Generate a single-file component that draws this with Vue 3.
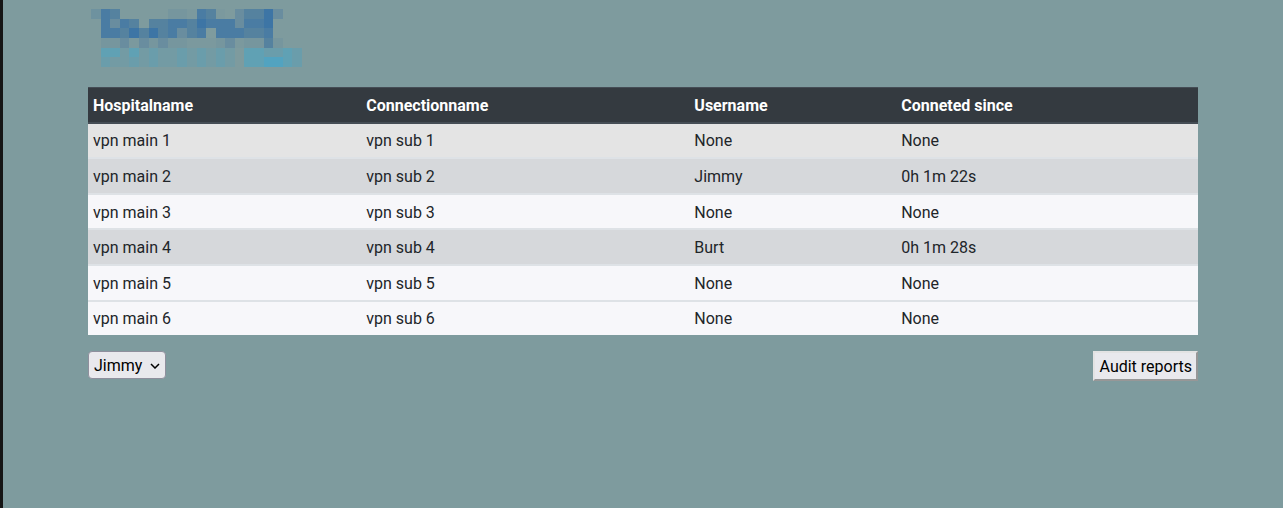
<script setup>
import { ref } from 'vue'

const rows = ref([
  { main: 'vpn main 1', sub: 'vpn sub 1', user: 'None', since: 'None', state: 'hovered' },
  { main: 'vpn main 2', sub: 'vpn sub 2', user: 'Jimmy', since: '0h 1m 22s', state: 'active tall' },
  { main: 'vpn main 3', sub: 'vpn sub 3', user: 'None', since: 'None', state: 'lowered' },
  { main: 'vpn main 4', sub: 'vpn sub 4', user: 'Burt', since: '0h 1m 28s', state: 'active tall' },
  { main: 'vpn main 5', sub: 'vpn sub 5', user: 'None', since: 'None', state: 'tall' },
  { main: 'vpn main 6', sub: 'vpn sub 6', user: 'None', since: 'None', state: '' },
])
const user = ref('Jimmy')

// Logo mosaic: one letter per tile
const palette = {
  a: '#6e929f', b: '#55829f', c: '#4a7ca3', d: '#3d75a5', e: '#76969e',
  f: '#698d9f', g: '#6a9dab', h: '#60a1b4', i: '#52a3c0', k: '#739ba4', m: '#7b999e',
}
const mosaic = [
  'acb.....eemcbm.fbbdf..',
  '.cfcb.bbccbdcccfccd...',
  '.ccbdbdbcfbc.cccbbc...',
  '.eefmfefeemmmefmeebe..',
  '.hhkhkgkkgkgkgk.hhgghg',
  '.gkkgkgkkgkgkgk.hhiihg',
]
const tiles = mosaic.flatMap((line, y) =>
  [...line].map((c, x) => ({ x, y, fill: palette[c] })).filter((t) => t.fill)
)
</script>

<template>
  <div class="page">
    <main class="container">
      <svg class="logo" viewBox="0 0 22 6" preserveAspectRatio="none" shape-rendering="crispEdges" role="img" aria-label="Logo">
        <rect v-for="t in tiles" :key="`${t.x}-${t.y}`" :x="t.x" :y="t.y" width="1" height="1" :fill="t.fill" />
      </svg>
      <table>
        <thead>
          <tr>
            <th scope="col">Hospitalname</th>
            <th scope="col">Connectionname</th>
            <th scope="col">Username</th>
            <th scope="col">Conneted since</th>
          </tr>
        </thead>
        <tbody>
          <tr v-for="r in rows" :key="r.main" :class="r.state">
            <td>{{ r.main }}</td>
            <td>{{ r.sub }}</td>
            <td>{{ r.user }}</td>
            <td>{{ r.since }}</td>
          </tr>
        </tbody>
      </table>
      <div class="actions">
        <div class="picker">
          <select v-model="user" aria-label="User">
            <option>Jimmy</option>
            <option>Burt</option>
          </select>
          <svg class="chevron" viewBox="0 0 10 6" aria-hidden="true"><path d="M1 1l4 4 4-4" /></svg>
        </div>
        <button type="button">Audit reports</button>
      </div>
    </main>
  </div>
</template>

<style>
body {
  background: #7e9b9e;
}
</style>

<style scoped>
.page {
  box-sizing: border-box;
  min-height: 100vh;
  border-left: 3px solid #151515;
  background: #7e9b9e;
  color: #212529;
  font: 16px/24px Roboto, sans-serif;
}
.container {
  max-width: 1110px;
  margin: 0 auto;
  padding: 9px 15px 0;
}
.logo {
  display: block;
  width: 211px;
  height: 58px;
  margin: 0 0 20px 3px;
}
table {
  width: 100%;
  border-collapse: separate;
  border-spacing: 0;
  background: #f7f7fa;
}
th,
td {
  padding: 5px 5px 4px;
  text-align: left;
  border-bottom: 2px solid #dee2e6;
}
th {
  padding-top: 6px;
  border-top: 1px solid #454d55;
  border-bottom-color: #454d55;
  background: #343a40;
  color: #fff;
  font-weight: 700;
}
.hovered td {
  background: #e4e4e4;
}
.active td {
  background: #d6d8db;
}
.tall td {
  padding-top: 6px;
}
.lowered td {
  padding-top: 6px;
  padding-bottom: 3px;
}
tbody tr:last-child td {
  border-bottom: 0;
}
.actions {
  display: flex;
  justify-content: space-between;
  align-items: flex-start;
  margin-top: 16px;
}
.picker {
  position: relative;
}
select {
  display: block;
  appearance: none;
  box-sizing: border-box;
  width: 78px;
  height: 28px;
  padding: 1px 20px 0 5px;
  border: 1px solid #8f8f9d;
  border-radius: 4px;
  background: #e9e9ed;
  color: #000;
  font: 16px/24px Roboto, sans-serif;
}
.chevron {
  position: absolute;
  top: 12px;
  right: 6px;
  width: 10px;
  height: 6px;
  fill: none;
  stroke: #000;
  stroke-width: 1.5;
  pointer-events: none;
}
button {
  box-sizing: border-box;
  height: 30px;
  padding: 1px 4px 0 5px;
  border: 2px solid;
  border-color: #e3e3e3 #979797 #979797 #e3e3e3;
  background: #e9e9ed;
  color: #000;
  font: 16px/24px Roboto, sans-serif;
}
</style>
